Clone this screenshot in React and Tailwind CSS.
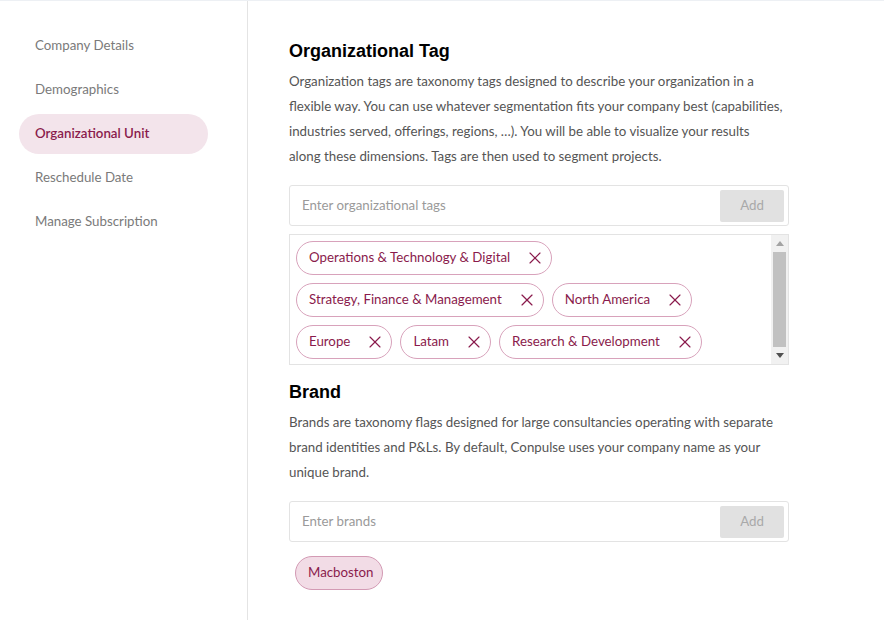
import { X } from "lucide-react";

const navItems = [
  "Company Details",
  "Demographics",
  "Organizational Unit",
  "Reschedule Date",
  "Manage Subscription",
];

const orgTags = [
  "Operations & Technology & Digital",
  "Strategy, Finance & Management",
  "North America",
  "Europe",
  "Latam",
  "Research & Development",
];

const body = { fontFamily: "Lato, 'Noto Sans', sans-serif" };
const head = { fontFamily: "'Liberation Sans', Arial, sans-serif" };

function AddInput({ placeholder }) {
  return (
    <div className="flex h-[41px] items-center rounded-[3px] border border-[#e3e3e3] bg-white pl-3 pr-1">
      <input
        className="min-w-0 flex-1 bg-transparent text-[13.3px] text-[#333] placeholder:text-[#9a9a9a] focus:outline-none"
        placeholder={placeholder}
      />
      <button className="h-[32px] w-[64px] rounded-[2px] bg-[#e1e1e1] text-[13.3px] text-[#a9a9a9]">
        Add
      </button>
    </div>
  );
}

function Tag({ label }) {
  return (
    <span className="flex h-[34px] items-center gap-[15px] rounded-full border border-[#d8a2bb] bg-white pl-[12px] pr-[6px] text-[13.3px] text-[#8a1b4c]">
      {label}
      <X size={20} strokeWidth={1.4} className="text-[#8a1b4c]" />
    </span>
  );
}

// fake classic scrollbar, the list slightly overflows in the original
function ScrollBar() {
  return (
    <div className="flex w-[17px] shrink-0 flex-col bg-[#f1f1f1]">
      <div className="flex h-[17px] items-center justify-center">
        <svg width="8" height="5" viewBox="0 0 8 5">
          <path d="M0 5 L4 0 L8 5 Z" fill="#a3a3a3" />
        </svg>
      </div>
      <div className="mx-[2px] flex-1 bg-[#c1c1c1]" />
      <div className="flex h-[17px] items-center justify-center">
        <svg width="8" height="5" viewBox="0 0 8 5">
          <path d="M0 0 L8 0 L4 5 Z" fill="#505050" />
        </svg>
      </div>
    </div>
  );
}

export default function App() {
  return (
    <div className="min-h-[620px] border-t border-[#edf0f4] bg-white" style={body}>
      <div className="flex min-h-[619px]">
        <aside className="w-[248px] shrink-0 border-r border-[#e4e4e4] pl-[19px] pr-[39px] pt-[25px]">
          <nav className="flex flex-col gap-1">
            {navItems.map((item) => {
              const active = item === "Organizational Unit";
              return (
                <a
                  key={item}
                  className={
                    active
                      ? "flex h-10 items-center rounded-full bg-[#f3e4eb] pl-4 text-[13.3px] font-semibold text-[#8a1b4c]"
                      : "flex h-10 items-center rounded-full pl-4 text-[13.3px] text-[#7a7a7a]"
                  }
                >
                  {item}
                </a>
              );
            })}
          </nav>
        </aside>

        <main className="w-[541px] pl-[41px] pt-[38px]">
          <h2 className="text-[18px] font-bold leading-6 text-black" style={head}>
            Organizational Tag
          </h2>
          <p className="mt-[6px] w-[495px] text-[13.3px] leading-[25px] text-[#555]">
            Organization tags are taxonomy tags designed to describe your organization in a
            flexible way. You can use whatever segmentation fits your company best (capabilities,
            industries served, offerings, regions, …). You will be able to visualize your results
            along these dimensions. Tags are then used to segment projects.
          </p>

          <div className="mt-4">
            <AddInput placeholder="Enter organizational tags" />
          </div>

          <div className="mt-2 flex h-[131px] border border-[#e3e3e3]">
            <div className="min-w-0 flex-1 overflow-hidden">
              <div className="flex flex-wrap gap-2 px-[6px] pt-[6px]">
                {orgTags.map((t) => (
                  <Tag key={t} label={t} />
                ))}
              </div>
            </div>
            <ScrollBar />
          </div>

          <h2 className="mt-[15px] text-[18px] font-bold leading-6 text-black" style={head}>
            Brand
          </h2>
          <p className="mt-[6px] text-[13.3px] leading-[25px] text-[#555]">
            Brands are taxonomy flags designed for large consultancies operating with separate
            brand identities and P&amp;Ls. By default, Conpulse uses your company name as your
            unique brand.
          </p>

          <div className="mt-4">
            <AddInput placeholder="Enter brands" />
          </div>

          <div className="mt-[14px] flex px-[6px]">
            <span className="flex h-[34px] items-center rounded-full border border-[#d39ab4] bg-[#f2dce6] pl-3 pr-[8px] text-[13.3px] text-[#8a1b4c]">
              Macboston
            </span>
          </div>
        </main>
      </div>
    </div>
  );
}
